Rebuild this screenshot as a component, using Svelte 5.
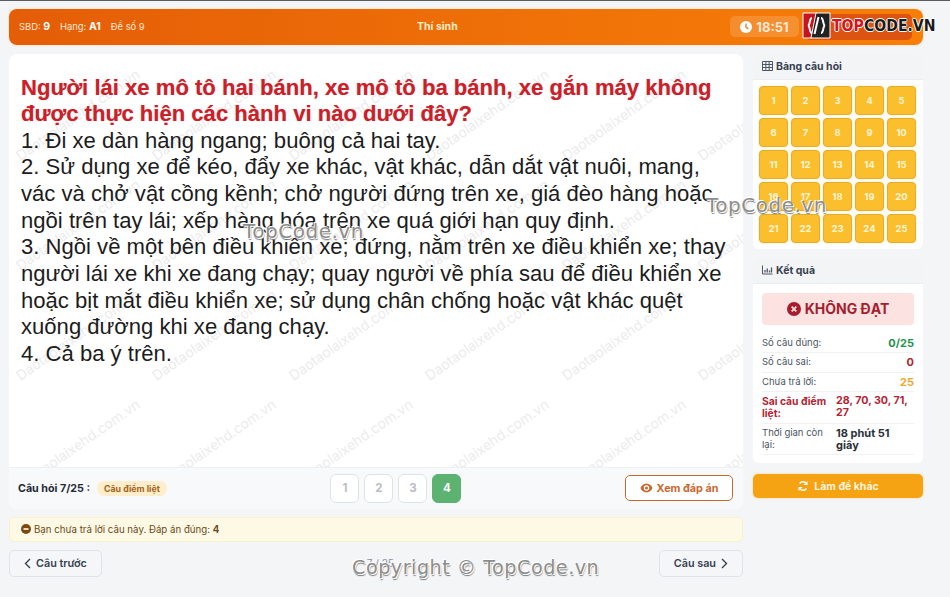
<script>
  const tiles = Array.from({ length: 25 }, (_, i) => i + 1);
  const marks = Array.from({ length: 30 }, (_, i) => i);
  const pages = [1, 2, 3, 4];
</script>

<div class="page">
  <header class="topbar">
    <div class="who">
      <span>SBD: <b>9</b></span>
      <span>Hạng: <b>A1</b></span>
      <span>Đề số 9</span>
    </div>
    <div class="role">Thí sinh</div>
    <div class="tools">
      <div class="timer">
        <svg width="12" height="12" viewBox="0 0 24 24"><circle cx="12" cy="12" r="12" fill="#fff" /><path d="M12 5v7.500l5 3" fill="none" stroke="#f08a3c" stroke-width="3" /></svg>
        18:51
      </div>
      <div class="submit"></div>
    </div>
  </header>

  <div class="columns">
    <main class="left">
      <section class="card question">
        <div class="marks">
          {#each marks as m (m)}
            <span>Daotaolaixehd.com.vn</span>
          {/each}
        </div>
        <div class="content">
          <h1>Người lái xe mô tô hai bánh, xe mô tô ba bánh, xe gắn máy không được thực hiện các hành vi nào dưới đây?</h1>
          <p>1. Đi xe dàn hàng ngang; buông cả hai tay.</p>
          <p>2. Sử dụng xe để kéo, đẩy xe khác, vật khác, dẫn dắt vật nuôi, mang, vác và chở vật cồng kềnh; chở người đứng trên xe, giá đèo hàng hoặc ngồi trên tay lái; xếp hàng hóa trên xe quá giới hạn quy định.</p>
          <p>3. Ngồi về một bên điều khiển xe; đứng, nằm trên xe điều khiển xe; thay người lái xe khi xe đang chạy; quay người về phía sau để điều khiển xe hoặc bịt mắt điều khiển xe; sử dụng chân chống hoặc vật khác quệt xuống đường khi xe đang chạy.</p>
          <p>4. Cả ba ý trên.</p>
        </div>
        <div class="answer-bar">
          <div class="q-label">
            <b>Câu hỏi 7/25 :</b>
            <span class="tag">Câu điểm liệt</span>
          </div>
          <div class="pager">
            {#each pages as p (p)}
              <button class:on={p === 4}>{p}</button>
            {/each}
          </div>
          <button class="reveal">
            <svg width="13" height="10" viewBox="0 0 26 20"><path d="M13 1C7 1 2.500 5.500 1 10c1.500 4.500 6 9 12 9s10.500-4.500 12-9C23.500 5.500 19 1 13 1z" fill="#c8672e" /><circle cx="13" cy="10" r="5.500" fill="#fff" /><circle cx="13" cy="10" r="3" fill="#c8672e" /></svg>
            Xem đáp án
          </button>
        </div>
      </section>

      <div class="notice">
        <svg width="10" height="10" viewBox="0 0 24 24"><circle cx="12" cy="12" r="12" fill="#7a4a12" /><rect x="6" y="10" width="12" height="4" fill="#fdf8e2" /></svg>
        <span>Bạn chưa trả lời câu này. Đáp án đúng: <b>4</b></span>
      </div>

      <nav class="steps">
        <button class="step">
          <svg width="7" height="11" viewBox="0 0 7 11"><path d="M6 1L1.500 5.500 6 10" fill="none" stroke="#374151" stroke-width="1.400" /></svg>
          Câu trước
        </button>
        <span class="count">7 / 25</span>
        <button class="step">
          Câu sau
          <svg width="7" height="11" viewBox="0 0 7 11"><path d="M1 1l4.500 4.500L1 10" fill="none" stroke="#374151" stroke-width="1.400" /></svg>
        </button>
      </nav>
    </main>

    <aside class="right">
      <section class="panel">
        <div class="panel-head">
          <svg width="11" height="10" viewBox="0 0 22 20"><path d="M1 1h20v18H1zM1 7h20M1 13h20M7.700 1v18M14.300 1v18" fill="none" stroke="#4b5563" stroke-width="2" /></svg>
          Bảng câu hỏi
        </div>
        <div class="tiles">
          {#each tiles as t (t)}
            <div class="tile">{t}</div>
          {/each}
        </div>
      </section>

      <section class="panel">
        <div class="panel-head">
          <svg width="11" height="10" viewBox="0 0 22 20"><path d="M1 1v17h20" fill="none" stroke="#4b5563" stroke-width="2" /><path d="M6 10v5M10.500 7v8M15 11v4M19 5v10" fill="none" stroke="#4b5563" stroke-width="2.600" /></svg>
          Kết quả
        </div>
        <div class="result-body">
          <div class="verdict">
            <svg width="14" height="14" viewBox="0 0 24 24"><circle cx="12" cy="12" r="12" fill="#a61e2d" /><path d="M8 8l8 8M16 8l-8 8" stroke="#fde2e2" stroke-width="3" /></svg>
            KHÔNG ĐẠT
          </div>
          <div class="row"><span>Số câu đúng:</span><b class="green">0/25</b></div>
          <div class="row"><span>Số câu sai:</span><b class="red">0</b></div>
          <div class="row"><span>Chưa trả lời:</span><b class="amber">25</b></div>
          <div class="row split alert"><b>Sai câu điểm liệt:</b><b>28, 70, 30, 71, 27</b></div>
          <div class="row split"><span>Thời gian còn lại:</span><b>18 phút 51 giây</b></div>
        </div>
      </section>

      <button class="again">
        <svg width="12" height="12" viewBox="0 0 24 24"><path d="M20 9A8.500 8.500 0 0 0 5 7M4 15a8.500 8.500 0 0 0 15 2" fill="none" stroke="#fff" stroke-width="3" /><path d="M21 2v8h-8zM3 22v-8h8z" fill="#fff" /></svg>
        Làm đề khác
      </button>
    </aside>
  </div>

  <div class="brand">
    <svg width="29" height="29" viewBox="0 0 29 29">
      <path d="M1 2h14l-5 25H1z" fill="#c8141e" stroke="#fff" stroke-width="1" />
      <path d="M14 2h14v25H9z" fill="#222" stroke="#fff" stroke-width="1" />
      <path d="M10 7c-3 0-1.500 7-4 7.500 2.500 .5 1 7.500 4 7.500" fill="none" stroke="#fff" stroke-width="2" />
      <path d="M19 7c3 0 1.500 7 4 7.500-2.500 .5-1 7.500-4 7.500" fill="none" stroke="#fff" stroke-width="2" />
      <path d="M16.500 6l-4 17" stroke="#fff" stroke-width="2" />
    </svg>
    <span class="brand-text"><em>TOP</em>CODE.VN</span>
  </div>
  <div class="stamp s1">TopCode.vn</div>
  <div class="stamp s2">TopCode.vn</div>
  <div class="stamp s3">Copyright © TopCode.vn</div>
</div>

<style>
  :global(body) {
    background: #f4f5f7;
    font-family: Inter, "Noto Sans", sans-serif;
    color: #1f2937;
  }
  .page {
    position: relative;
    width: 950px;
    height: 597px;
    box-sizing: border-box;
    overflow: hidden;
    border-top: 1.500px solid #5c5c5c;
    padding: 7.500px 27px 0 9px;
  }
  button {
    font-family: inherit;
    cursor: pointer;
  }
  .topbar {
    display: flex;
    justify-content: space-between;
    align-items: center;
    height: 36px;
    padding: 0 11px 0 10px;
    border-radius: 8px;
    color: #fff;
    background: linear-gradient(90deg, #e45d07, #f77f08);
    box-shadow: 0 0 3px #fbd9b2;
    font-size: 9.400px;
  }
  .who {
    display: flex;
    align-items: baseline;
    gap: 10px;
    color: #ffe9d6;
  }
  .who b {
    color: #fff;
    font-size: 10.500px;
  }
  .role {
    font-weight: 700;
    font-size: 10.500px;
    color: #ffedc9;
  }
  .tools {
    display: flex;
    align-items: center;
    gap: 6px;
  }
  .timer {
    display: flex;
    align-items: center;
    justify-content: center;
    gap: 4px;
    width: 69px;
    height: 21px;
    border-radius: 5px;
    background: rgba(255, 255, 255, 0.16);
    color: #ffe9d6;
    font-size: 13px;
    font-weight: 700;
  }
  .submit {
    width: 107px;
    height: 26px;
    border-radius: 5px;
    background: #dc5412;
  }
  .columns {
    display: grid;
    grid-template-columns: 734px 170px;
    gap: 10px;
    margin-top: 9px;
  }
  .left {
    display: flex;
    flex-direction: column;
    gap: 8px;
  }
  .card {
    position: relative;
    background: #fff;
    border-radius: 8px;
    overflow: hidden;
  }
  .marks {
    position: absolute;
    inset: 0 0 42px 0;
    overflow: hidden;
    display: grid;
    grid-template-columns: repeat(6, 136.500px);
    grid-auto-rows: 110px;
    padding-top: 6px;
    pointer-events: none;
  }
  .marks span {
    place-self: center;
    white-space: nowrap;
    transform: rotate(-35deg);
    font-size: 14px;
    color: #ececec;
  }
  .content {
    position: relative;
    height: 413px;
    box-sizing: border-box;
    padding: 21px 12px 0 12px;
    font-family: "Liberation Sans", Arial, sans-serif;
    font-size: 22.080px;
    line-height: 26.640px;
    color: #1c1c1c;
  }
  h1 {
    margin: 0;
    font-size: inherit;
    line-height: inherit;
    font-weight: 700;
    color: #c9202a;
    text-shadow: 0 0 1px rgba(198, 40, 40, 0.4);
  }
  p {
    margin: 0;
  }
  .answer-bar {
    display: flex;
    justify-content: space-between;
    align-items: center;
    height: 42px;
    padding: 0 10px 0 9px;
    background: #f8f9fb;
    border-top: 1px solid #eef0f3;
    box-sizing: border-box;
    font-size: 10.700px;
  }
  .q-label {
    display: flex;
    align-items: center;
    gap: 7px;
  }
  .tag {
    padding: 2px 7px;
    border-radius: 7px;
    background: #feeecb;
    color: #a5641c;
    font-size: 8.800px;
    font-weight: 700;
  }
  .pager {
    display: flex;
    gap: 5px;
  }
  .pager button {
    width: 29px;
    height: 29px;
    padding: 0;
    border: 1px solid #dfe2e7;
    border-radius: 6px;
    background: #fff;
    color: #b9bec6;
    font-weight: 700;
    font-size: 11.500px;
  }
  .pager button.on {
    border-color: #5cb270;
    background: #5cb270;
    color: #fff;
  }
  .reveal {
    display: flex;
    align-items: center;
    justify-content: center;
    gap: 4px;
    width: 108px;
    height: 26px;
    padding: 0;
    border: 1px solid #c8672e;
    border-radius: 5px;
    background: #fff;
    color: #c8672e;
    font-size: 10.800px;
    font-weight: 700;
  }
  .notice {
    display: flex;
    align-items: center;
    gap: 3px;
    height: 25px;
    box-sizing: border-box;
    padding-left: 11px;
    border: 1px solid #f9f0cc;
    border-radius: 5px;
    background: #fef9e5;
    color: #6d4a20;
    font-size: 9.700px;
  }
  .steps {
    display: flex;
    justify-content: space-between;
    align-items: center;
  }
  .step {
    display: flex;
    align-items: center;
    justify-content: center;
    gap: 5px;
    height: 27px;
    padding: 0 14px;
    border: 1px solid #dfe2e7;
    border-radius: 5px;
    background: #f5f6f8;
    color: #374151;
    font-size: 10.800px;
    font-weight: 600;
  }
  .count {
    color: #8b9098;
    font-size: 10px;
  }
  .right {
    display: flex;
    flex-direction: column;
    gap: 9px;
  }
  .panel {
    background: #fff;
    border-radius: 6px;
    overflow: hidden;
  }
  .panel-head {
    display: flex;
    align-items: center;
    gap: 3px;
    height: 26px;
    padding-left: 9px;
    background: #f3f4f6;
    border-bottom: 1px solid #eceef1;
    box-sizing: border-box;
    font-size: 10.500px;
    font-weight: 700;
    color: #374151;
  }
  .tiles {
    display: grid;
    grid-template-columns: repeat(5, 29px);
    gap: 3px;
    padding: 6px;
  }
  .tile {
    height: 29px;
    display: grid;
    place-items: center;
    border: 1px solid #e5ad2b;
    border-radius: 4px;
    box-sizing: border-box;
    background: #fbbf2d;
    box-shadow: 0 0 2px #fde69d;
    color: #fff4d6;
    font-size: 9.500px;
    font-weight: 700;
  }
  .result-body {
    padding: 9px 9px 8px 9px;
  }
  .verdict {
    display: flex;
    align-items: center;
    justify-content: center;
    gap: 4px;
    height: 32px;
    margin-bottom: 9px;
    border-radius: 4px;
    background: #fde2e2;
    color: #a61e2d;
    font-size: 14px;
    font-weight: 700;
  }
  .row {
    display: flex;
    justify-content: space-between;
    align-items: center;
    padding: 3.250px 0;
    border-bottom: 1px solid #f1f2f4;
    font-size: 9.500px;
    line-height: 12px;
    color: #4b5563;
  }
  .row b {
    font-size: 11px;
  }
  .green {
    color: #23914a;
  }
  .red {
    color: #b42332;
  }
  .amber {
    color: #eaa92e;
  }
  .split {
    display: grid;
    grid-template-columns: 74px 1fr;
    align-items: start;
    padding: 3px 0;
    line-height: 12.300px;
  }
  .split b:last-child {
    font-size: 11px;
    color: #2b3138;
  }
  .alert b {
    font-size: 10.300px;
    color: #b42332;
  }
  .alert b:last-child {
    font-size: 10.700px;
    color: #b42332;
  }
  .again {
    display: flex;
    align-items: center;
    justify-content: center;
    gap: 5px;
    height: 24px;
    margin-top: 2px;
    padding: 0;
    border: 0;
    border-radius: 5px;
    background: #f5a312;
    box-shadow: 0 0 3px #fcdca0;
    color: #fff4dd;
    font-size: 10.500px;
    font-weight: 700;
  }
  .brand {
    position: absolute;
    left: 802px;
    top: 10px;
    display: flex;
    align-items: center;
    gap: 1px;
  }
  .brand-text {
    font-family: "DejaVu Sans", sans-serif;
    font-size: 16px;
    font-weight: 700;
    color: #1b1b1b;
    transform: scaleX(0.88);
    transform-origin: left center;
    text-shadow: 1px 0 #fff, -1px 0 #fff, 0 1px #fff, 0 -1px #fff;
  }
  .brand-text em {
    font-style: normal;
    color: #d2151f;
  }
  .stamp {
    position: absolute;
    font-family: "DejaVu Sans", sans-serif;
    color: #8d8d8d;
    font-size: 20px;
    letter-spacing: 0.5px;
    text-shadow: 1px 1px 0 #fff, -1px -1px 0 #fff, 1px 2px 1px #777;
    white-space: nowrap;
  }
  .s1 {
    left: 243px;
    top: 218px;
  }
  .s2 {
    left: 706px;
    top: 192px;
  }
  .s3 {
    left: 352px;
    top: 555px;
    font-size: 19.200px;
  }
</style>
